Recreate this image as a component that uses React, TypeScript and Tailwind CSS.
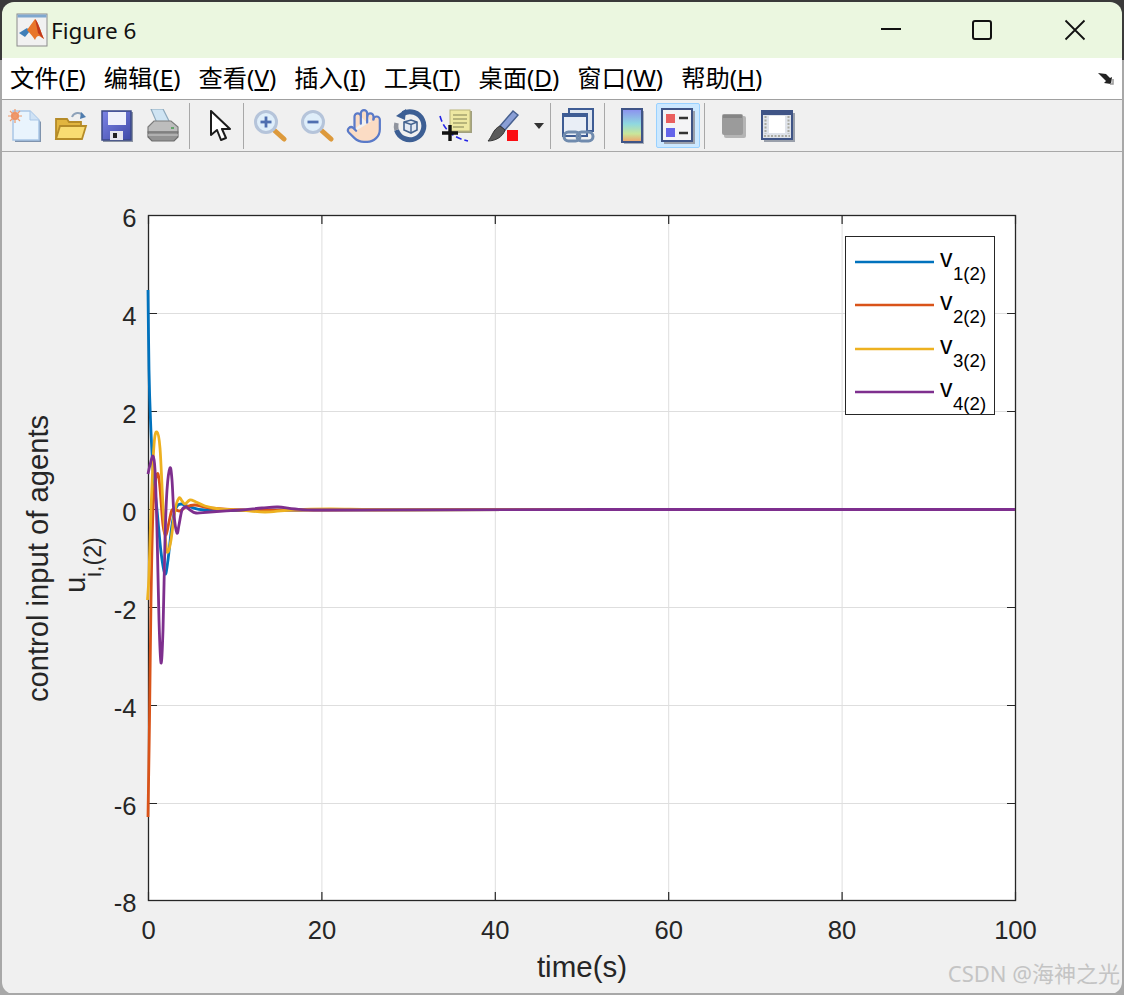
import { Hand } from "lucide-react";

type Pt = [number, number];

const uiFont = "font-['Noto_Sans','Noto_Sans_CJK_SC',sans-serif]";

// curve points are in screen pixels, 0 on the y axis is 509.5
const tail: Pt[] = [[400, 509.8], [600, 509.5], [1015, 509.5]];

const curves: { color: string; pts: Pt[] }[] = [
  {
    color: "#0072bd",
    pts: [[148, 290], [149, 370], [150.5, 420], [153, 470], [157, 510], [161, 552], [165, 574], [168, 560], [172, 525], [176, 508], [181, 504], [190, 507], [205, 510], [240, 510.5], [300, 510], ...tail],
  },
  {
    color: "#d95319",
    pts: [[148, 817], [149.5, 720], [151, 600], [153, 510], [155.5, 480], [158, 474], [160, 488], [163, 525], [166, 535], [169, 522], [172, 510], [176, 510], [180, 511], [186, 507], [195, 505], [210, 508], [240, 510], [300, 510], ...tail],
  },
  {
    color: "#edb120",
    pts: [[147.5, 600], [149, 575], [151, 510], [154, 445], [157, 432], [160, 448], [163, 505], [166, 545], [168, 552], [171, 540], [175, 510], [179, 498], [182, 501], [185, 504], [190, 500], [196, 502], [205, 506], [220, 509], [240, 510], [265, 512], [290, 510], [330, 509], ...tail],
  },
  {
    color: "#7e2f8e",
    pts: [[148, 474], [150, 465], [153, 456], [155, 470], [157, 530], [159, 620], [161, 663], [163, 630], [165, 540], [167, 490], [170, 468], [172, 480], [174, 515], [177, 533], [179, 525], [182, 510], [186, 507], [190, 510], [196, 513], [210, 512], [240, 510], [262, 508], [278, 507], [295, 509], [320, 510], ...tail],
  },
];

const smooth = (p: Pt[]) => {
  let d = `M${p[0][0]} ${p[0][1]}`;
  for (let i = 0; i < p.length - 1; i++) {
    const a = p[Math.max(i - 1, 0)];
    const b = p[i];
    const c = p[i + 1];
    const e = p[Math.min(i + 2, p.length - 1)];
    const k = 6;
    d += ` C${b[0] + (c[0] - a[0]) / k} ${b[1] + (c[1] - a[1]) / k} ${c[0] - (e[0] - b[0]) / k} ${c[1] - (e[1] - b[1]) / k} ${c[0]} ${c[1]}`;
  }
  return d;
};

const yTicks = [
  { label: "6", y: 215.5 },
  { label: "4", y: 313.5 },
  { label: "2", y: 411.5 },
  { label: "0", y: 509.5 },
  { label: "-2", y: 607.5 },
  { label: "-4", y: 705.5 },
  { label: "-6", y: 803.5 },
  { label: "-8", y: 900.5 },
];
const xTicks = [
  { label: "0", x: 148.5 },
  { label: "20", x: 321.9 },
  { label: "40", x: 495.3 },
  { label: "60", x: 668.7 },
  { label: "80", x: 842.1 },
  { label: "100", x: 1015.5 },
];

const legend = [
  { color: "#0072bd", n: "1", y: 262 },
  { color: "#d95319", n: "2", y: 305 },
  { color: "#edb120", n: "3", y: 349 },
  { color: "#7e2f8e", n: "4", y: 392 },
];

const menus = [
  ["文件", "F"],
  ["编辑", "E"],
  ["查看", "V"],
  ["插入", "I"],
  ["工具", "T"],
  ["桌面", "D"],
  ["窗口", "W"],
  ["帮助", "H"],
];

const MatlabIcon = () => (
  <svg width="32" height="34" viewBox="0 0 32 34">
    <rect x="1" y="1" width="30" height="32" fill="#f1f1f1" stroke="#8b8b8b" strokeWidth="1" />
    <rect x="1.5" y="1.5" width="29" height="3" fill="#7fa8cf" />
    <path d="M3 20 L11 15 L14 18 L9 24 Z" fill="#3f7fb8" />
    <path d="M11 17 L19 6 C22 8 25 20 28 26 C24 24 22 20 19 27 C17 24 14 20 11 17 Z" fill="#e8762a" />
    <path d="M19 6 C22 8 25 20 28 26 C25 24 24 22 22 20 C21 15 20 10 19 6 Z" fill="#c23a1c" />
  </svg>
);

const NewIcon = () => (
  <svg width="34" height="34" viewBox="0 0 34 34">
    <path d="M7 4 H24 L33 13 V33 H7 Z" fill="#7f93ad" />
    <path d="M5 2 H22 L31 11 V31 H5 Z" fill="#e9f4fd" stroke="#a9c6e6" strokeWidth="1.5" />
    <path d="M22 2 V11 H31" fill="#cfe2f5" stroke="#a9c6e6" strokeWidth="1" />
    <circle cx="7" cy="7" r="4" fill="#ee8a5a" />
    <path d="M7 0 V14 M0 7 H14 M2 2 L12 12 M12 2 L2 12" stroke="#ee9a6c" strokeWidth="1.2" />
  </svg>
);

const OpenIcon = () => (
  <svg width="34" height="34" viewBox="0 0 34 34">
    <path d="M18 8 C20 3 26 3 29 6" fill="none" stroke="#8fa3ba" strokeWidth="2" />
    <path d="M27 3 L32 8 L26 10 Z" fill="#4f7cae" />
    <path d="M2 10 H13 L15 13 H27 V30 H2 Z" fill="#e2b53f" stroke="#b58b28" strokeWidth="1.8" />
    <path d="M2 30 L6 17 H32 L28 30 Z" fill="#f9dc72" stroke="#b58b28" strokeWidth="1.8" />
  </svg>
);

const SaveIcon = () => (
  <svg width="34" height="34" viewBox="0 0 34 34">
    <defs>
      <linearGradient id="fl" x1="0" y1="0" x2="1" y2="1">
        <stop offset="0" stopColor="#7c84e6" />
        <stop offset="1" stopColor="#3f4aa8" />
      </linearGradient>
    </defs>
    <rect x="3" y="3" width="30" height="30" fill="#8b93a3" />
    <path d="M2 2 H31 V31 H2 Z" fill="url(#fl)" stroke="#3b4a86" strokeWidth="1.5" />
    <rect x="8" y="3" width="18" height="13" fill="#eef0fb" />
    <rect x="10" y="22" width="13" height="9" fill="#e6e6ee" />
    <rect x="13" y="24" width="4" height="5" fill="#222" />
  </svg>
);

const PrintIcon = () => (
  <svg width="34" height="34" viewBox="0 0 34 34">
    <path d="M5 0 H17 L24 14 H11 Z" fill="#cfe4f3" stroke="#8ea9bd" strokeWidth="1.2" />
    <path d="M2 18 L8 12 H25 L32 18 V23 H2 Z" fill="#bdbdbd" stroke="#7c7c7c" strokeWidth="1.2" />
    <path d="M2 23 H32 V28 L28 32 H6 L2 28 Z" fill="#929292" stroke="#6e6e6e" strokeWidth="1.2" />
    <path d="M2 26 H32" stroke="#cfcfcf" strokeWidth="1" />
    <rect x="25" y="18" width="3" height="2" fill="#62a36b" />
  </svg>
);

const ArrowIcon = () => (
  <svg width="24" height="34" viewBox="0 0 24 34">
    <path d="M3 2 V26 L9 21 L13 31 L18 29 L14 20 H22 Z" fill="#fff" stroke="#1c1c1c" strokeWidth="2" strokeLinejoin="round" />
  </svg>
);

const Zoom = ({ plus }: { plus: boolean }) => (
  <svg width="34" height="34" viewBox="0 0 34 34">
    <path d="M21 21 L31 30" stroke="#dd9a3c" strokeWidth="5" strokeLinecap="round" />
    <circle cx="13" cy="13" r="10.5" fill="#dfeefa" stroke="#b5c4da" strokeWidth="3" />
    <path d="M7.5 13 H18.5" stroke="#4f6fb0" strokeWidth="2.8" />
    {plus && <path d="M13 7.5 V18.5" stroke="#4f6fb0" strokeWidth="2.8" />}
  </svg>
);

const RotateIcon = () => (
  <svg width="34" height="34" viewBox="0 0 34 34">
    <path d="M10 4.5 A14 14 0 1 1 3.5 21" fill="none" stroke="#3d5f94" strokeWidth="5" />
    <path d="M3.5 21 A14 14 0 0 1 3.5 14" fill="none" stroke="#8f949e" strokeWidth="4.5" />
    <path d="M13 0 L3 7 L12 11 Z" fill="#3d5f94" />
    <path d="M11 13 L18 11 L24 13 V21 L18 24 L11 21 Z" fill="#e4eaf3" stroke="#44638f" strokeWidth="1.6" />
    <path d="M11 13 L18 15.5 L24 13 M18 15.5 V24" fill="none" stroke="#44638f" strokeWidth="1.4" />
  </svg>
);

const CursorIcon = () => (
  <svg width="34" height="34" viewBox="0 0 34 34">
    <rect x="13" y="2" width="21" height="22" fill="#a1a07f" />
    <rect x="12" y="1" width="20" height="21" fill="#eee8a2" stroke="#b9b47a" strokeWidth="1" />
    <path d="M15 6 H29 M15 10 H29 M15 14 H29 M15 18 H26" stroke="#a5a26f" strokeWidth="1.4" />
    <path d="M2 7 C5 18 12 28 30 32" fill="none" stroke="#2323e6" strokeWidth="1.6" strokeDasharray="6 3" />
    <path d="M4 24 H20 M12 16 V32" stroke="#111" strokeWidth="3.4" />
  </svg>
);

const BrushIcon = () => (
  <svg width="34" height="34" viewBox="0 0 34 34">
    <path d="M14 17 L27 2 L32 6 L19 21 Z" fill="#8a9fd6" stroke="#47608f" strokeWidth="1.4" />
    <path d="M14 17 L19 21 C17 28 9 32 2 32 C6 28 7 20 14 17 Z" fill="#5a5a5a" stroke="#333" strokeWidth="1" />
    <rect x="21" y="21" width="11" height="11" fill="#fb0d12" />
  </svg>
);

const LinkIcon = () => (
  <svg width="34" height="36" viewBox="0 0 34 36">
    <rect x="8" y="1" width="24" height="22" fill="#dfe6f0" stroke="#3e5c94" strokeWidth="2" />
    <rect x="2" y="6" width="24" height="22" fill="#e9eef6" stroke="#3e5c94" strokeWidth="2" />
    <rect x="2" y="6" width="24" height="3" fill="#3e5c94" />
    <rect x="3" y="24" width="16" height="9" rx="4.5" fill="none" stroke="#708bae" strokeWidth="3" />
    <rect x="16" y="24" width="16" height="9" rx="4.5" fill="none" stroke="#708bae" strokeWidth="3" />
  </svg>
);

const ColorbarIcon = () => (
  <svg width="24" height="36" viewBox="0 0 24 36">
    <defs>
      <linearGradient id="cb" x1="0" y1="0" x2="0" y2="1">
        <stop offset="0" stopColor="#8c8ff0" />
        <stop offset="0.45" stopColor="#8fd8e0" />
        <stop offset="0.75" stopColor="#c9e69a" />
        <stop offset="1" stopColor="#f2a06a" />
      </linearGradient>
    </defs>
    <rect x="4" y="3" width="20" height="33" fill="#a9aeb8" />
    <rect x="2" y="1" width="20" height="33" fill="url(#cb)" stroke="#3f5486" strokeWidth="2" />
  </svg>
);

const LegendIcon = () => (
  <svg width="34" height="36" viewBox="0 0 34 36">
    <rect x="3" y="3" width="31" height="33" fill="#9aa0ab" />
    <rect x="1" y="1" width="30" height="32" fill="#f4f4f6" stroke="#3f5486" strokeWidth="2" />
    <rect x="5" y="6" width="9" height="9" fill="#ea5f5f" />
    <rect x="5" y="20" width="9" height="9" fill="#6464ea" />
    <path d="M18 10 H27 M18 25 H27" stroke="#333" strokeWidth="2.4" />
  </svg>
);

const GreyIcon = () => (
  <svg width="24" height="24" viewBox="0 0 24 24">
    <rect x="2" y="2" width="22" height="22" rx="2" fill="#b5b5b5" />
    <rect x="0" y="0" width="21" height="21" rx="2" fill="#9b9b9b" />
    <rect x="1" y="1" width="19" height="3" fill="#858585" />
  </svg>
);

const PanelIcon = () => (
  <svg width="34" height="32" viewBox="0 0 34 32">
    <rect x="3" y="3" width="31" height="29" fill="#9aa0ab" />
    <rect x="1" y="1" width="30" height="28" fill="#dfe3ea" stroke="#3f5486" strokeWidth="2" />
    <rect x="1" y="1" width="30" height="4" fill="#3f5486" />
    <rect x="8" y="6" width="16" height="17" fill="#fff" />
    <path d="M4.5 6 V24 M27.5 6 V24 M3 26 H29" stroke="#a9a9a0" strokeWidth="2" strokeDasharray="2 1.5" />
  </svg>
);

const Sep = () => <div className="w-px h-[46px] bg-[#a8a8a8]" />;

const Titlebar = () => (
  <div className="h-14 shrink-0 bg-[#ebf7e0] flex items-center pl-[14px]">
    <MatlabIcon />
    <span className={`ml-[3px] mt-px text-[22.5px] text-[#111] ${uiFont}`}>Figure 6</span>
    <div className="ml-auto flex items-center">
      <svg width="22" height="22" viewBox="0 0 22 22" className="mr-[69px]">
        <path d="M1 10 H21" stroke="#111" strokeWidth="2" />
      </svg>
      <svg width="22" height="22" viewBox="0 0 22 22" className="mr-[71px]">
        <rect x="2" y="2" width="18" height="18" rx="2" fill="none" stroke="#111" strokeWidth="2" />
      </svg>
      <svg width="22" height="22" viewBox="0 0 22 22" className="mr-9">
        <path d="M1.5 1.5 L20.5 20.5 M20.5 1.5 L1.5 20.5" stroke="#111" strokeWidth="1.8" />
      </svg>
    </div>
  </div>
);

const Menubar = () => (
  <div className={`h-[42px] shrink-0 bg-white border-b border-[#a0a0a0] flex items-center pl-2 pr-2 gap-[18px] text-[24.3px] text-black ${uiFont}`}>
    {menus.map(([name, key]) => (
      <span key={key} className="whitespace-nowrap">
        {name}(<u>{key}</u>)
      </span>
    ))}
    <svg width="18" height="16" viewBox="0 0 18 16" className="ml-auto">
      <path d="M2 2 L10 3 L14 7 L16 6 L15 13 L8 12 L10 10 L6 6 Z" fill="#222" />
      <path d="M14 13 H17 V8" fill="none" stroke="#999" strokeWidth="1.5" />
    </svg>
  </div>
);

const Toolbar = () => (
  <div className="h-[52px] shrink-0 bg-[#f0f0f0] border-b border-[#a8a8a8] flex items-center [&_svg]:blur-[0.5px]">
    <div className="w-[46px] flex justify-center"><NewIcon /></div>
    <div className="w-[46px] flex justify-center"><OpenIcon /></div>
    <div className="w-[46px] flex justify-center"><SaveIcon /></div>
    <div className="w-[46px] flex justify-center"><PrintIcon /></div>
    <div className="ml-[3px]"><Sep /></div>
    <div className="ml-[7px] w-[46px] flex justify-center"><ArrowIcon /></div>
    <Sep />
    <div className="ml-[3px] w-[46px] flex justify-center"><Zoom plus /></div>
    <div className="w-[47px] flex justify-center"><Zoom plus={false} /></div>
    <div className="w-[47px] flex justify-center">
      <Hand size={38} fill="#fbdcc4" stroke="#5a7ac8" strokeWidth={1.4} />
    </div>
    <div className="w-[45px] flex justify-center"><RotateIcon /></div>
    <div className="w-[46px] flex justify-center"><CursorIcon /></div>
    <div className="w-[50px] flex justify-center"><BrushIcon /></div>
    <div className="w-[22px] flex justify-center">
      <svg width="10" height="6" viewBox="0 0 10 6"><path d="M0 0 H10 L5 6 Z" fill="#333" /></svg>
    </div>
    <Sep />
    <div className="w-[53px] flex justify-center"><LinkIcon /></div>
    <Sep />
    <div className="w-[51px] flex justify-center pl-[3px]"><ColorbarIcon /></div>
    <div className="w-[44px] h-[45px] flex items-center justify-center rounded-[2px] bg-[#cce8ff] border border-[#99d1ff]">
      <LegendIcon />
    </div>
    <div className="ml-1"><Sep /></div>
    <div className="w-[55px] flex justify-center pl-0.5"><GreyIcon /></div>
    <div className="w-[36px] flex justify-center"><PanelIcon /></div>
  </div>
);

const Figure = () => (
  // viewBox keeps screenshot coordinates so the axes read like the picture
  <svg viewBox="2 152 1120 841" className="block w-[1120px] h-[841px] bg-[#f0f0f0] font-['Liberation_Sans',Arial,sans-serif]">
    <rect x="148.5" y="215.5" width="867" height="685" fill="#fff" />
    {yTicks.slice(1, -1).map((t) => (
      <line key={t.label} x1="148.5" x2="1015.5" y1={t.y} y2={t.y} stroke="#dedede" strokeWidth="1" />
    ))}
    {xTicks.slice(1, -1).map((t) => (
      <line key={t.label} x1={t.x} x2={t.x} y1="215.5" y2="900.5" stroke="#dedede" strokeWidth="1" />
    ))}
    {yTicks.map((t) => (
      <g key={t.label}>
        <path d={`M148.5 ${t.y} h8.5 M1015.5 ${t.y} h-8.5`} stroke="#262626" strokeWidth="1.2" />
        <text x="136.5" y={t.y + 11} textAnchor="end" fontSize="25.6" fill="#262626">{t.label}</text>
      </g>
    ))}
    {xTicks.map((t) => (
      <g key={t.label}>
        <path d={`M${t.x} 900.5 v-8.5 M${t.x} 215.5 v8.5`} stroke="#262626" strokeWidth="1.2" />
        <text x={t.x} y="939" textAnchor="middle" fontSize="25.6" fill="#262626">{t.label}</text>
      </g>
    ))}
    <rect x="148.5" y="215.5" width="867" height="685" fill="none" stroke="#262626" strokeWidth="1.3" />

    {curves.map((c) => (
      <path key={c.color} d={smooth(c.pts)} fill="none" stroke={c.color} strokeWidth="2.8" strokeLinejoin="round" />
    ))}

    <text x="582" y="977" textAnchor="middle" fontSize="29.5" fill="#262626">time(s)</text>
    <text transform="translate(48 558.5) rotate(-90)" textAnchor="middle" fontSize="29.2" fill="#262626">control input of agents</text>
    <text transform="translate(85 593) rotate(-90)" fontSize="29.5" fill="#262626">u</text>
    <text transform="translate(101 577) rotate(-90)" fontSize="23" fill="#262626">i,(2)</text>

    <rect x="845.5" y="236.5" width="149" height="178" fill="#fff" stroke="#262626" strokeWidth="1" />
    {legend.map((l) => (
      <g key={l.n}>
        <line x1="855" x2="934" y1={l.y} y2={l.y} stroke={l.color} strokeWidth="2.4" />
        <text x="940" y={l.y + 5} fontSize="25" fill="#000">v</text>
        <text x="953" y={l.y + 18} fontSize="18.6" fill="#000">{l.n}(2)</text>
      </g>
    ))}

    <text x="1120" y="982" textAnchor="end" fontSize="22" fill="#c4c4c4" className="font-['Noto_Sans','Noto_Sans_CJK_SC',sans-serif]">CSDN @海神之光</text>
  </svg>
);

const App = () => {
  return (
    <div className="w-[1124px] h-[995px] overflow-hidden pt-0.5 px-0.5 bg-[linear-gradient(#3a3a3a_0,#3a3a3a_60px,#a8a8a8_60px)]">
      <div className="w-[1120px] h-[992px] flex flex-col rounded-[12px] overflow-hidden">
        <Titlebar />
        <Menubar />
        <Toolbar />
        <Figure />
      </div>
    </div>
  );
};

export default App;
